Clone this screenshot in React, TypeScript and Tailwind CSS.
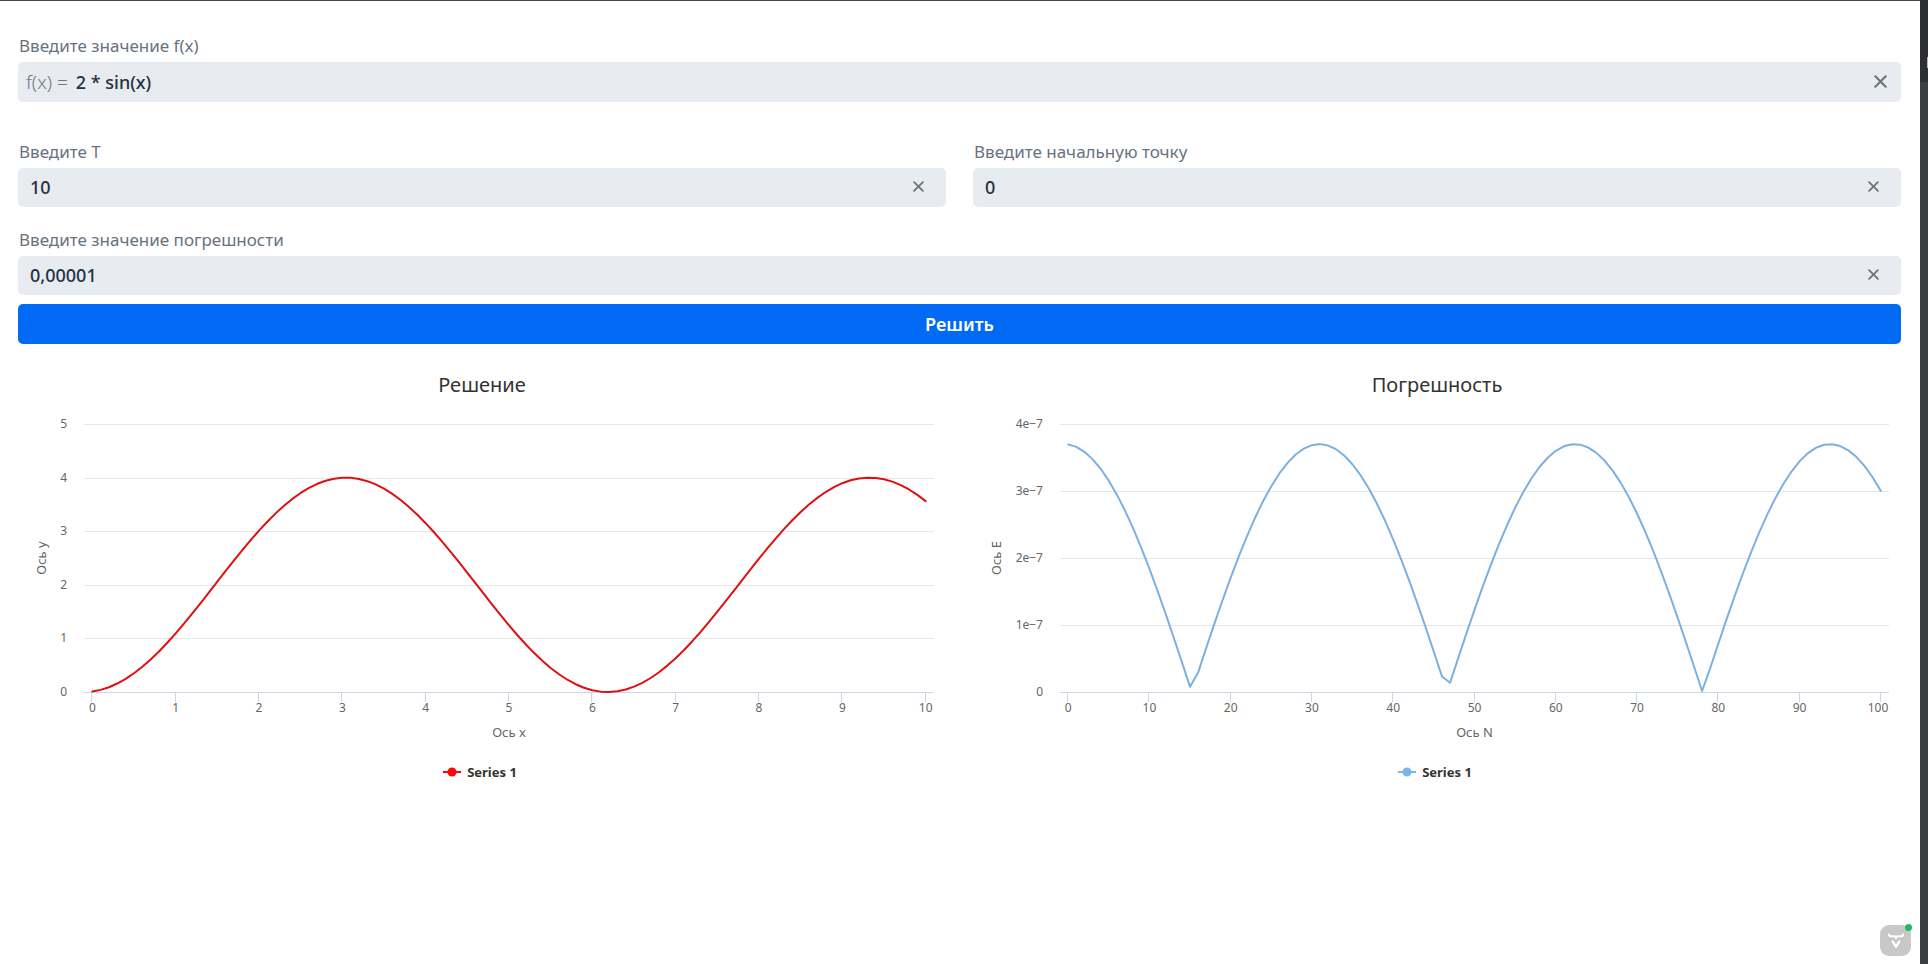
import { useId, useLayoutEffect, useRef, useState, type ReactNode } from "react";

function ClearIcon({ className }: { className: string }) {
  return (
    <svg viewBox="0 0 12 12" className={className} fill="none" stroke="currentColor" strokeWidth="2" strokeLinecap="round" aria-hidden="true">
      <path d="M1.2 1.2 L10.8 10.8 M10.8 1.2 L1.2 10.8" />
    </svg>
  );
}

type FieldProps = {
  label: string;
  initial: string;
  prefix?: ReactNode;
  large?: boolean;
};

function TextField({ label, initial, prefix, large = false }: FieldProps) {
  const id = useId();
  const [value, setValue] = useState(initial);
  return (
    <div className="flex min-w-0 flex-col gap-1">
      <label htmlFor={id} className="pl-px text-[17px] leading-6 text-[#68727f]">
        {label}
      </label>
      <div
        className={
          large
            ? "flex h-10 items-center gap-2 rounded-[5px] bg-[#e8ebef] pr-[14px] pl-2"
            : "flex h-[39px] items-center rounded-[5px] bg-[#e8ebef] pr-[22px] pl-3"
        }
      >
        {prefix}
        <input
          id={id}
          value={value}
          onChange={(e) => setValue(e.target.value)}
          className="min-w-0 flex-1 bg-transparent text-[18px] font-medium text-[#243142] outline-none"
        />
        <button type="button" aria-label="Очистить" onClick={() => setValue("")} className="pb-0.5 text-[#6b7683]">
          <ClearIcon className={large ? "size-[13px]" : "size-[11px]"} />
        </button>
      </div>
    </div>
  );
}

type Point = [number, number];

type ChartProps = {
  title: string;
  xTitle: string;
  yTitle: string;
  color: string;
  markerColor: string;
  points: Point[];
  xMax: number;
  xStep: number;
  yMax: number;
  yLabel: (v: number) => string;
  plotLeft: number;
};

const PLOT_TOP = 9;
const PLOT_HEIGHT = 268;
const PLOT_RIGHT = 12;

function LineChart(props: ChartProps) {
  const { title, xTitle, yTitle, color, markerColor, points, xMax, xStep, yMax, yLabel, plotLeft } = props;
  const box = useRef<HTMLDivElement>(null);
  const [width, setWidth] = useState(0);

  useLayoutEffect(() => {
    const el = box.current;
    if (!el) return;
    const measure = () => setWidth(el.clientWidth);
    measure();
    const observer = new ResizeObserver(measure);
    observer.observe(el);
    return () => observer.disconnect();
  }, []);

  const plotWidth = Math.max(0, width - plotLeft - PLOT_RIGHT);
  const pad = (plotWidth * 0.01) / 1.02;
  const sx = (x: number) => plotLeft + pad + (x / xMax) * (plotWidth - 2 * pad);
  const sy = (y: number) => PLOT_TOP + PLOT_HEIGHT * (1 - y / yMax);
  const snap = (v: number) => Math.round(v) + 0.5;
  const bottom = PLOT_TOP + PLOT_HEIGHT;
  const xTicks = Array.from({ length: xMax / xStep + 1 }, (_, i) => i * xStep);
  const yTicks = Array.from({ length: yMax + 1 }, (_, i) => i);
  const path = points.map(([x, y], i) => `${i ? "L" : "M"}${sx(x).toFixed(2)} ${sy(y).toFixed(2)}`).join(" ");
  const middle = PLOT_TOP + PLOT_HEIGHT / 2;

  return (
    <section className="flex min-w-0 flex-col">
      <h2 className="text-center text-[20px] leading-7 text-[#333333]">{title}</h2>
      <div ref={box} className="mt-4 h-[333px] w-full">
        <svg width="100%" height="333" role="img" aria-label={title}>
          {yTicks.map((t) => (
            <g key={t}>
              {t > 0 && (
                <line x1={plotLeft} x2={plotLeft + plotWidth} y1={snap(sy(t))} y2={snap(sy(t))} stroke="#e6e6e6" />
              )}
              <text x={plotLeft - 17} y={sy(t) + 4} textAnchor="end" fontSize="12" fill="#666666">
                {yLabel(t)}
              </text>
            </g>
          ))}
          <line x1={plotLeft} x2={plotLeft + plotWidth} y1={bottom + 0.5} y2={bottom + 0.5} stroke="#ccd6eb" />
          {xTicks.map((t) => (
            <g key={t}>
              <line x1={snap(sx(t)) - 1} x2={snap(sx(t)) - 1} y1={bottom} y2={bottom + 10} stroke="#ccd6eb" />
              <text
                x={Math.min(sx(t), width - PLOT_RIGHT - String(t).length * 4 + 1)}
                y={bottom + 20}
                textAnchor="middle"
                fontSize="12"
                fill="#666666"
              >
                {t}
              </text>
            </g>
          ))}
          <path d={path} fill="none" stroke={color} strokeWidth="2" strokeLinejoin="round" strokeLinecap="round" />
          <text x={plotLeft + plotWidth / 2} y={bottom + 45} textAnchor="middle" fontSize="13" fill="#666666">
            {xTitle}
          </text>
          <text x="28" y={middle} transform={`rotate(-90 28 ${middle})`} textAnchor="middle" fontSize="13" fill="#666666">
            {yTitle}
          </text>
        </svg>
      </div>
      <div className="mt-4 flex items-center justify-center gap-1.5 pr-1">
        <svg width="18" height="10" aria-hidden="true">
          <line x1="0" x2="18" y1="5" y2="5" stroke={markerColor} strokeWidth="2" />
          <circle cx="9" cy="5" r="4.5" fill={markerColor} />
        </svg>
        <span className="text-[13px] leading-4 font-bold text-[#333333]">Series 1</span>
      </div>
    </section>
  );
}

const solution: Point[] = Array.from({ length: 101 }, (_, i) => [i / 10, 2 - 2 * Math.cos(i / 10 + 0.1)]);
const errors: Point[] = Array.from({ length: 101 }, (_, i) => [i, 3.7 * Math.abs(Math.cos(i / 10 + 0.05))]);

export default function App() {
  return (
    <div className="flex min-h-screen bg-white font-['Noto_Sans',sans-serif]">
      <main className="min-w-0 flex-1 border-t border-[#45434b] pt-[33px] pr-[19px] pb-8 pl-[18px]">
        <form onSubmit={(e) => e.preventDefault()} className="flex flex-col">
          <TextField
            label="Введите значение f(x)"
            initial="2 * sin(x)"
            large
            prefix={<span className="text-[19px] font-light text-[#6f7985]">f(x) =</span>}
          />
          <div className="mt-[38px] grid grid-cols-2 gap-[27px]">
            <TextField label="Введите T" initial="10" />
            <TextField label="Введите начальную точку" initial="0" />
          </div>
          <div className="mt-[21px]">
            <TextField label="Введите значение погрешности" initial="0,00001" />
          </div>
          <button type="submit" className="mt-[9px] h-10 rounded-[5px] bg-[#006af5] text-[18px] font-semibold text-white">
            Решить
          </button>
        </form>
        <div className="mt-[27px] grid grid-cols-2 gap-[27px]">
          <LineChart
            title="Решение"
            xTitle="Ось x"
            yTitle="Ось y"
            color="#e01010"
            markerColor="#fb0505"
            points={solution}
            xMax={10}
            xStep={1}
            yMax={5}
            yLabel={(v) => String(v)}
            plotLeft={66}
          />
          <LineChart
            title="Погрешность"
            xTitle="Ось N"
            yTitle="Ось E"
            color="#7cb0e0"
            markerColor="#7cb5ec"
            points={errors}
            xMax={100}
            xStep={10}
            yMax={4}
            yLabel={(v) => (v ? `${v}e−7` : "0")}
            plotLeft={87}
          />
        </div>
      </main>
      <div className="flex w-2 flex-col bg-[#3c3f41]">
        <div className="flex h-[82px] flex-col items-end bg-[#2e2f30] pt-[57px]">
          <div className="h-[11px] w-px bg-[#b8b8b8]" />
        </div>
      </div>
      <button type="button" aria-label="Vaadin" className="fixed right-[17px] bottom-2 size-[31px] rounded-[9px] bg-[#c8c8c8]">
        <svg viewBox="0 0 31 31" className="size-full" fill="none" stroke="white" strokeWidth="2" strokeLinecap="round" strokeLinejoin="round" aria-hidden="true">
          <path d="M9 9.2 V9.8 Q9 11.2 10.6 11.2 H13.8 Q16 11.2 16 13 Q16 11.2 18.2 11.2 H21.4 Q23 11.2 23 9.8 V9.2" />
          <path d="M12.8 16.6 L16 22 L19.2 16.6" strokeWidth="2.4" />
        </svg>
        <span className="absolute -top-px -right-px size-[7px] rounded-full bg-[#1fb864]" />
      </button>
    </div>
  );
}
